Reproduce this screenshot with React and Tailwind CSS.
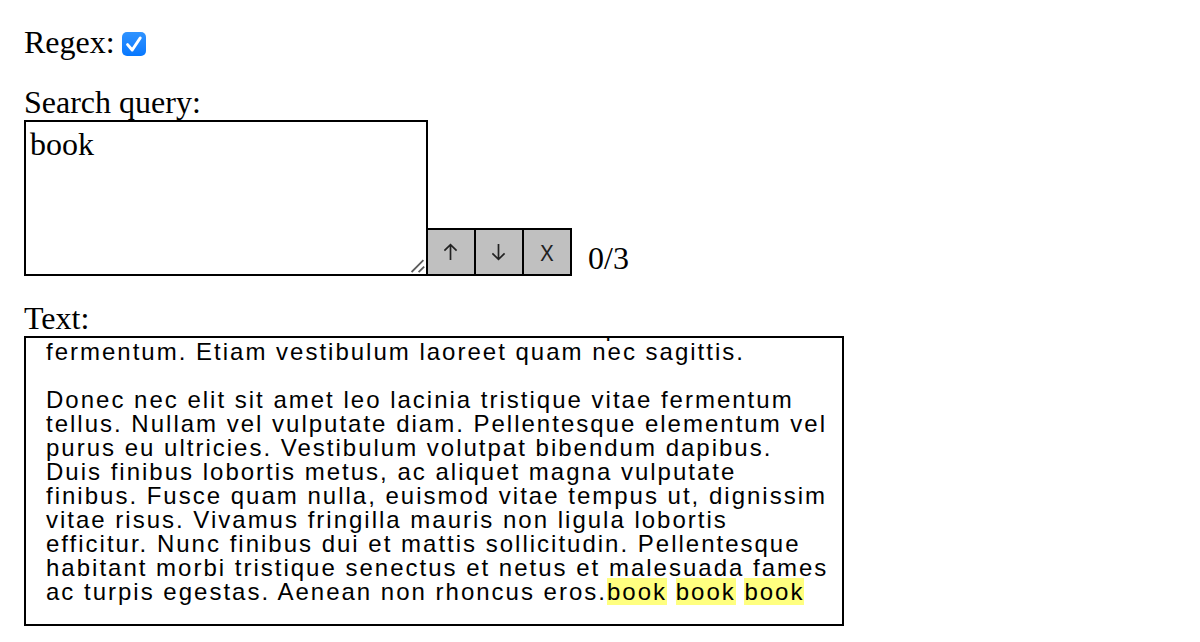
import { useLayoutEffect, useRef, useState } from "react";

const INTRO =
  "Duis finibus lobortis metus mauris non vitae porta lacus fermentum. Etiam vestibulum laoreet quam nec sagittis.";

const BODY =
  "Donec nec elit sit amet leo lacinia tristique vitae fermentum tellus. Nullam vel vulputate diam. Pellentesque elementum vel purus eu ultricies. Vestibulum volutpat bibendum dapibus. Duis finibus lobortis metus, ac aliquet magna vulputate finibus. Fusce quam nulla, euismod vitae tempus ut, dignissim vitae risus. Vivamus fringilla mauris non ligula lobortis efficitur. Nunc finibus dui et mattis sollicitudin. Pellentesque habitant morbi tristique senectus et netus et malesuada fames ac turpis egestas. Aenean non rhoncus eros.";

function Arrow({ down = false }) {
  return (
    <svg width="14" height="18" viewBox="0 0 14 18" fill="none" stroke="currentColor" strokeWidth="1.7" aria-hidden="true">
      {down ? <path d="M6.5 1V16.3M0.4 10.4L6.5 16.4L12.6 10.4" /> : <path d="M6.5 17V1.7M0.4 7.6L6.5 1.6L12.6 7.6" />}
    </svg>
  );
}

function ToolButton({ label, children }) {
  return (
    <button
      type="button"
      aria-label={label}
      className="flex h-12 w-12 items-center justify-center border-2 border-l-0 border-black bg-[#c0c0c0] font-['Noto_Sans',sans-serif] text-[22px] leading-6 text-[#222]"
    >
      {children}
    </button>
  );
}

export default function App() {
  const [regex, setRegex] = useState(true);
  const [query, setQuery] = useState("book");
  const textRef = useRef(null);

  useLayoutEffect(() => {
    textRef.current.scrollTop = textRef.current.scrollHeight;
  }, []);

  return (
    <main className="bg-white px-6 pt-6 pb-4 font-['Liberation_Serif',serif] text-[32px] leading-9 text-black">
      <div className="flex items-center gap-[7px]">
        <label htmlFor="regex">Regex:</label>
        <span className="pt-1">
          <span className="relative flex">
            <input
              id="regex"
              type="checkbox"
              checked={regex}
              onChange={(e) => setRegex(e.target.checked)}
              className="h-6 w-6 appearance-none rounded-[5px] border border-gray-400 bg-white checked:border-0 checked:bg-linear-to-b checked:from-[#2f93ff] checked:to-[#0578ff]"
            />
            {regex && (
              <svg className="pointer-events-none absolute inset-0" width="24" height="24" viewBox="0 0 24 24" fill="none" stroke="white" strokeWidth="3" strokeLinecap="round" strokeLinejoin="round" aria-hidden="true">
                <path d="M5.6 12.6L10.2 18L18.2 6" />
              </svg>
            )}
          </span>
        </span>
      </div>

      <div className="mt-6">
        <label htmlFor="query" className="block">
          Search query:
        </label>
        <div className="flex items-end">
          <div className="relative flex">
            <textarea
              id="query"
              value={query}
              onChange={(e) => setQuery(e.target.value)}
              className="h-[156px] w-[404px] resize-none border-2 border-black bg-white p-1 leading-9 outline-none"
            />
            <svg className="pointer-events-none absolute right-[3px] bottom-[3px]" width="14" height="14" viewBox="0 0 14 14" fill="none" stroke="#5c5c5c" strokeWidth="1.8" aria-hidden="true">
              <path d="M0.6 13L12.4 1.2M7.6 13.2L13.2 7.6" />
            </svg>
          </div>
          <ToolButton label="Previous match">
            <Arrow />
          </ToolButton>
          <ToolButton label="Next match">
            <Arrow down />
          </ToolButton>
          <ToolButton label="Clear">X</ToolButton>
          <output className="ml-4">0/3</output>
        </div>
      </div>

      <section className="mt-6">
        <h2>Text:</h2>
        <div
          ref={textRef}
          className="h-[290px] max-w-[820px] overflow-y-auto border-2 border-black py-5 pr-2.5 pl-5 font-['Liberation_Sans',sans-serif] text-2xl leading-6 tracking-[2px] [scrollbar-width:none]"
        >
          <p>{INTRO}</p>
          <p className="mt-6">
            {BODY}
            <mark className="bg-[#ffff80]">book</mark> <mark className="bg-[#ffff80]">book</mark>{" "}
            <mark className="bg-[#ffff80]">book</mark>
          </p>
        </div>
      </section>
    </main>
  );
}
